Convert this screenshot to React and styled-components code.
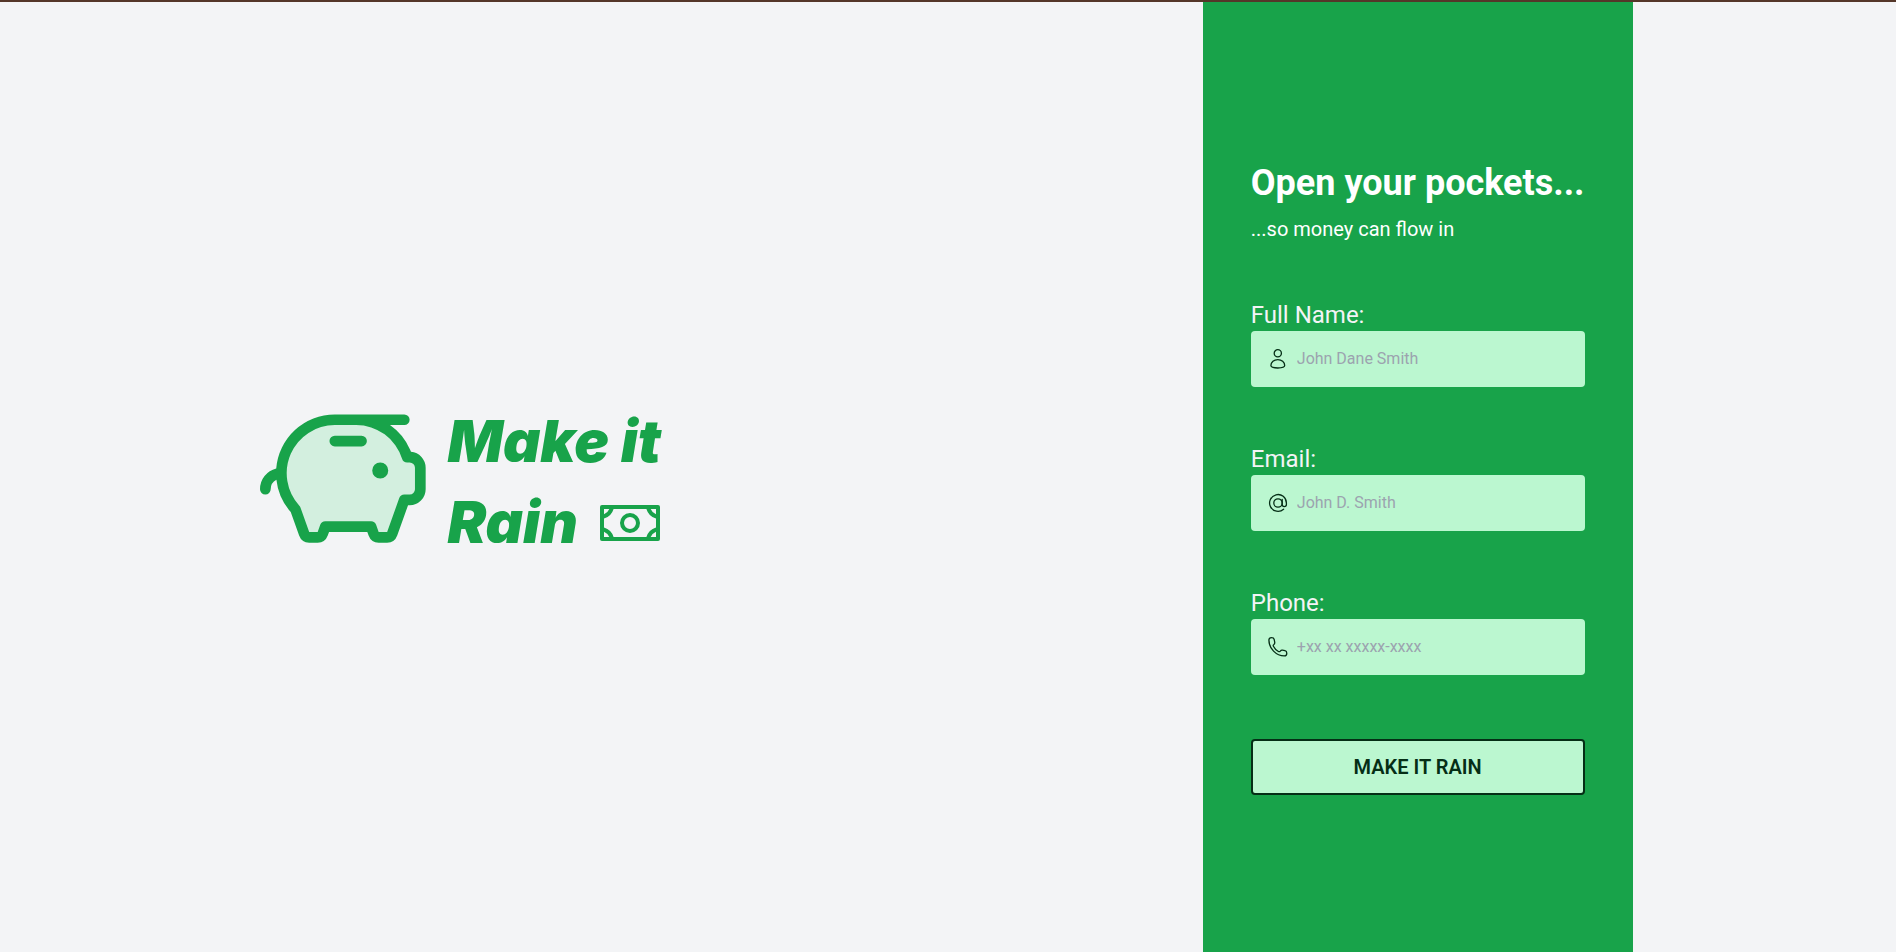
import React from "react";
import styled, { createGlobalStyle } from "styled-components";
import { PiPiggyBankDuotone, PiMoney } from "react-icons/pi";

const GlobalStyle = createGlobalStyle`
  *, *::before, *::after { box-sizing: border-box; }
  body {
    margin: 0;
    background: #f3f4f6;
    font-family: Roboto, "Liberation Sans", sans-serif;
  }
  h1, h2, p { margin: 0; }
`;

const Page = styled.main`
  box-sizing: content-box;
  min-height: 100vh;
  display: flex;
  flex-wrap: wrap;
  justify-content: space-around;
  padding-right: 3px;
  border-top: 2px solid #543629;
`;

const Brand = styled.header`
  display: flex;
  align-items: center;
  gap: 16px;
  padding-right: 20px;
  color: #18a34a;
`;

const PiggyIcon = styled(PiPiggyBankDuotone)`
  flex: none;
  width: 171px;
  height: 171px;

  path[opacity] {
    fill: #d3efdf;
    opacity: 1;
  }
`;

const BrandName = styled.h1`
  display: flex;
  flex-direction: column;
  padding-top: 8px;
  font: italic 900 58px/81px Inter, "Liberation Sans", sans-serif;
`;

const BrandLine = styled.span`
  display: flex;
  align-items: center;
  gap: 20px;
`;

const MoneyIcon = styled(PiMoney)`
  width: 64px;
  height: 64px;
`;

const Panel = styled.section`
  display: flex;
  flex-direction: column;
  justify-content: center;
  gap: 56px;
  padding: 50px 48px 48px;
  background: #18a34a;
  color: #fff;
`;

const Intro = styled.div`
  display: flex;
  flex-direction: column;
  gap: 12px;
`;

const Title = styled.h2`
  font-size: 36px;
  line-height: 40px;
  font-weight: 700;
`;

const Subtitle = styled.p`
  font-size: 20px;
  line-height: 28px;
`;

const Form = styled.form`
  display: flex;
  flex-direction: column;
  gap: 56px;
`;

const FieldGroup = styled.div`
  display: flex;
  flex-direction: column;
`;

const Label = styled.label`
  color: #f3f4f6;
  font-size: 24px;
  line-height: 32px;
`;

const InputBox = styled.div`
  display: flex;
  align-items: center;
  gap: 8px;
  height: 56px;
  padding: 0 16px;
  border-radius: 4px;
  background: #bbf7d0;
  color: #052e16;
`;

const LineIcon = styled.svg`
  flex: none;
  width: 22px;
  height: 22px;
  fill: none;
  stroke: currentColor;
  stroke-width: 1.3;
  stroke-linecap: round;
  stroke-linejoin: round;
`;

const Input = styled.input`
  flex: 1;
  min-width: 0;
  padding: 0;
  border: 0;
  outline: 0;
  background: transparent;
  color: inherit;
  font: 16px/24px Roboto, "Liberation Sans", sans-serif;

  &::placeholder {
    color: #9ca3af;
    opacity: 1;
  }
`;

const SubmitButton = styled.button`
  height: 56px;
  margin-top: 8px;
  border: 2px solid #052e16;
  border-radius: 4px;
  background: #bbf7d0;
  color: #052e16;
  font: 600 20px/28px Roboto, "Liberation Sans", sans-serif;
  text-transform: uppercase;
  cursor: pointer;
`;

function PersonIcon() {
  return (
    <LineIcon viewBox="0 0 22 22" aria-hidden="true">
      <circle cx="10.8" cy="5.3" r="3.6" />
      <path d="M10.8 11.6c3.8 0 6.9 2.6 6.9 6 0 1.8-3 2.4-6.9 2.4s-6.9-.6-6.9-2.4c0-3.4 3.1-6 6.9-6z" />
    </LineIcon>
  );
}

function AtIcon() {
  return (
    <LineIcon viewBox="0 0 22 22" aria-hidden="true">
      <circle cx="11" cy="11" r="4.2" />
      <path d="M15.2 7.3v5.2a2.1 2.1 0 0 0 4.2 0V11a8.4 8.4 0 1 0-2.8 6.2" />
    </LineIcon>
  );
}

function PhoneIcon() {
  return (
    <LineIcon viewBox="0 0 22 22" aria-hidden="true">
      <path d="M1.9 4C1.9 2.3 2.8 1.7 4.5 1.7c1.6 0 2.4.4 2.7 1.8l.5 2.7c.2 1-.1 1.6-.8 2.2-.8.6-.9 1.1-.5 1.9 1.1 2.2 2.8 4 5 5.2.8.4 1.3.3 1.9-.4.6-.8 1.2-1.1 2.2-.9l2.4.5c1.4.3 1.9 1 1.9 2.5 0 1.9-.7 2.7-2.4 2.7C9.1 19.9 1.9 12.4 1.9 4z" />
    </LineIcon>
  );
}

function Field({ id, label, icon: Icon, ...inputProps }) {
  return (
    <FieldGroup>
      <Label htmlFor={id}>{label}</Label>
      <InputBox>
        <Icon />
        <Input id={id} name={id} {...inputProps} />
      </InputBox>
    </FieldGroup>
  );
}

export default function App() {
  return (
    <>
      <GlobalStyle />
      <Page>
        <Brand>
          <PiggyIcon aria-hidden="true" />
          <BrandName>
            <BrandLine>Make it</BrandLine>
            <BrandLine>
              Rain
              <MoneyIcon aria-hidden="true" />
            </BrandLine>
          </BrandName>
        </Brand>
        <Panel>
          <Intro>
            <Title>Open your pockets...</Title>
            <Subtitle>...so money can flow in</Subtitle>
          </Intro>
          <Form onSubmit={(event) => event.preventDefault()}>
            <Field id="name" label="Full Name:" icon={PersonIcon} type="text" placeholder="John Dane Smith" />
            <Field id="email" label="Email:" icon={AtIcon} type="email" placeholder="John D. Smith" />
            <Field id="phone" label="Phone:" icon={PhoneIcon} type="tel" placeholder="+xx xx xxxxx-xxxx" />
            <SubmitButton type="submit">Make it rain</SubmitButton>
          </Form>
        </Panel>
      </Page>
    </>
  );
}
